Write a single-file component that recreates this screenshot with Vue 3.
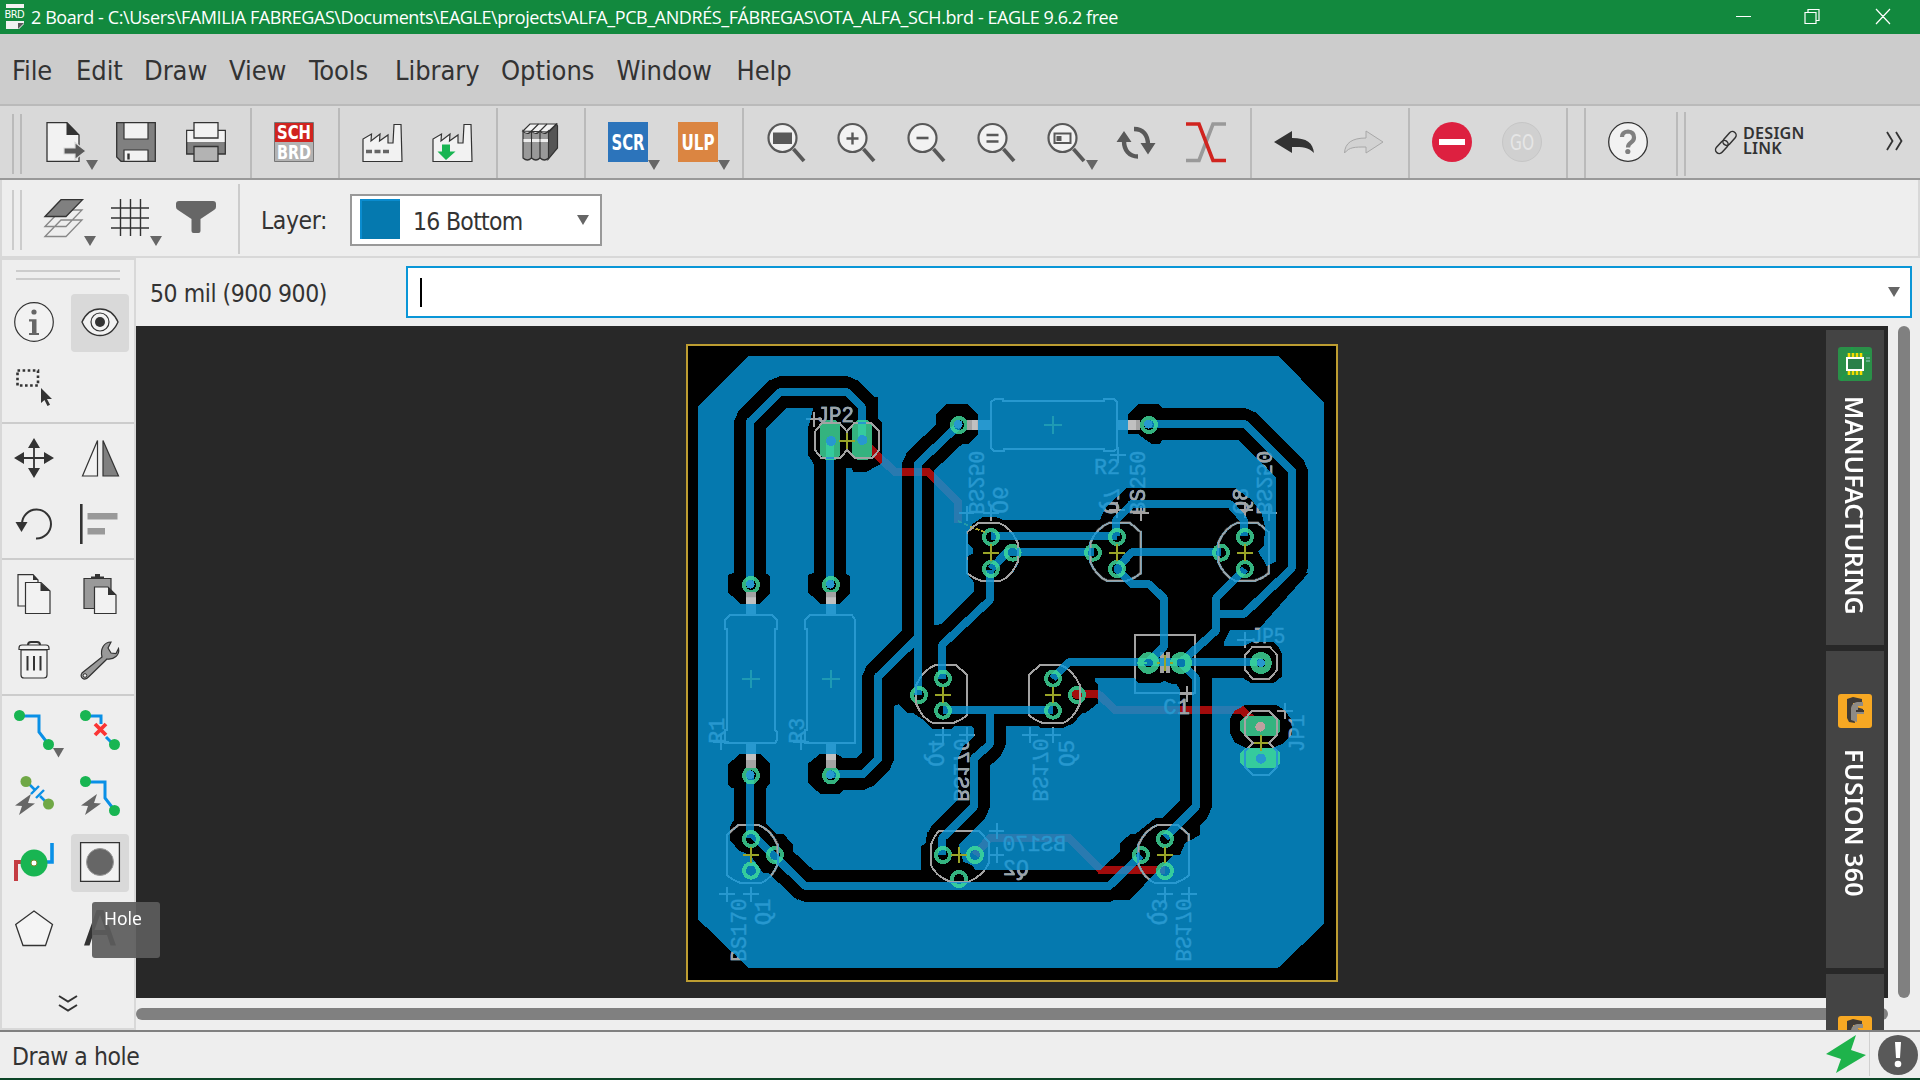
<script setup>
const D = '#333'
const lens = '<circle cx="16.500" cy="16" r="14" fill="#f2f2f2" stroke="#595959" stroke-width="2.200"/><path d="M27.500 27L38 39" stroke="#595959" stroke-width="3.800" fill="none"/>'
const plant = `<path d="M1 39.500V17l8.500-5-.5 7 9-7-.5 7 8.500-6v8h5L32 2.500h7l1 37z" fill="#f2f2f2" stroke="${D}" stroke-width="1.200"/>`
const bolt = '<path d="M17 0L1 11.500l7 .5L5 21 21 9.500l-7-.5z" transform="translate(0 18)" fill="#666"/>'
const dot = (x, y, c = '#18b552') => `<circle cx="${x}" cy="${y}" r="5.500" fill="${c}"/>`
const tab = (w) => `font-family="Liberation Sans Narrow, DejaVu Sans Condensed, sans-serif" font-weight="bold" text-anchor="middle" textLength="${w}" lengthAdjust="spacingAndGlyphs"`

const icons = {
  export: `<path d="M1 .7H21L33 13V39.300H1z" fill="#f2f2f2" stroke="${D}" stroke-width="1.300"/><path d="M20.500.5V13H33z" fill="${D}"/><path d="M18 26h11v-5.500l11 8.500-11 8.500V32H18z" fill="#595959" stroke="#d9d9d9" stroke-width="1.200"/>`,
  save: `<path d="M.7.7H39.300V39.300H5L.7 35z" fill="#808080" stroke="${D}" stroke-width="1.300"/><path d="M8 .7V17H32V.7zM8 39.300V28H32V39.300z" fill="#f2f2f2" stroke="${D}" stroke-width="1.200"/><path d="M12.500 31.500v6" stroke="${D}" stroke-width="2.400"/>`,
  print: `<path d="M.7 8.500H39.300V32H.7z" fill="#808080" stroke="${D}" stroke-width="1.300"/><path d="M1.300 9H38.700V20H1.300z" fill="#f2f2f2"/><path d="M8 .7H32V16H8z" fill="#f2f2f2" stroke="${D}" stroke-width="1.300"/><path d="M8 24.500H32V39.300H8z" fill="#b3b3b3" stroke="${D}" stroke-width="1.300"/>`,
  sch: `<path d="M.5.5h39v39H.5z" fill="#b3b3b3" stroke="#777"/><path d="M1 1h38v19H1z" fill="#d0241f"/><g fill="#fff" font-size="19"><text x="20" y="17" ${tab(34)}>SCH</text><text x="20" y="37" ${tab(34)}>BRD</text></g>`,
  plant: plant + '<path d="M4 29.500H29" stroke="#666" stroke-width="3.400" stroke-dasharray="6 2.500"/>',
  plantDown: plant + '<path d="M10 22.500h8v7h5.500L14 38 5.500 29.500H10z" fill="#18b552"/>',
  books: `<g stroke="${D}" stroke-width="1.200"><path d="M27 12L36.500 2l1 2v22L28 37.500z" fill="#555"/><path d="M3 9L10 2h26.500L28 10z" fill="#f2f2f2"/><path d="M3 9q4 5 8.500 0 4 5 8.500 0 4 5 8.500 0V36q-4 4-8.500 0-4 4-8.500 0-4 4-8.500 0z" fill="#999"/><path d="M11.500 9v27M20 9v27M11.500 9l7-7M20 9l7-7" fill="none"/></g><path d="M3.500 17h7.500v3H3.500zM12 17h7.500v3H12zM20.500 17h7.500v3h-7.500z" fill="#eee"/>`,
  scr: `<path d="M0 0h40v40H0z" fill="#2c74bb"/><text x="20" y="27.500" font-size="21" fill="#fff" ${tab(33)}>SCR</text>`,
  ulp: `<path d="M0 0h40v40H0z" fill="#db8541"/><text x="20" y="27.500" font-size="21" fill="#fff" ${tab(33)}>ULP</text>`,
  fit: lens + '<path d="M7 10.500h19v11.500H7z" fill="#595959"/>',
  plus: lens + '<path d="M10.500 16.500h12M16.500 10.500v12" stroke="#595959" stroke-width="2.400"/>',
  minus: lens + '<path d="M10.500 16h12" stroke="#595959" stroke-width="2.600"/>',
  equal: lens + '<path d="M10.500 13h12M10.500 19.500h12" stroke="#595959" stroke-width="2.400"/>',
  area: lens + '<path d="M8.500 11.500h16v9.500h-16z" fill="#f2f2f2" stroke="#595959" stroke-width="2"/><path d="M10.500 14h5v5h-5z" fill="#595959"/>',
  refresh: '<g fill="none" stroke="#595959" stroke-width="4.400"><path d="M18 7C27 7 32 13 32 23"/><path d="M22 34.500C13 34.500 8 28 8 19"/></g><path d="M24.500 21H39.500L32 32.500zM.5 20H15.500L8 9z" fill="#595959"/>',
  ratsnest: '<path d="M0 38.500H13L27 2h13" fill="none" stroke="#999" stroke-width="3.600"/><path d="M0 2h13L27 38.500h13" fill="none" stroke="#d0241f" stroke-width="3.600"/>',
  undo: `<path d="M0 20L18 9v7c15 0 21 5 22 15-6-6-11-6-22-6v6z" fill="${D}"/>`,
  redo: '<path d="M39 20L22 9v7C8 16 1 21 .500 31c5-6 10-6 21.500-6v6z" fill="#d2d2d2" stroke="#a8a8a8"/>',
  stop: '<circle cx="20" cy="20" r="20" fill="#dd2040"/><path d="M7 17h26v6H7z" fill="#fff"/>',
  go: '<circle cx="20" cy="20" r="19.500" fill="#d0d0d0" stroke="#c6c6c6"/><text x="20" y="28" font-family="Liberation Sans Narrow, DejaVu Sans Condensed, sans-serif" font-size="22" fill="#e6e6e6" text-anchor="middle" textLength="24" lengthAdjust="spacingAndGlyphs">GO</text>',
  help: `<circle cx="20" cy="20" r="19.300" fill="#f2f2f2" stroke="${D}" stroke-width="1.300"/><path d="M14 15q0-5 6-5.500 6 .5 6 6 0 3-3 5-3 2-3 5" fill="none" stroke="#808080" stroke-width="4.200"/><circle cx="19.800" cy="29.500" r="2.600" fill="#808080"/>`,
  layers: `<g stroke="${D}" stroke-width="1.300"><path d="M1 37.500L17 21h21L22 37.500zM1 27.500L17 11h21L22 27.500z" fill="#eee" stroke="#888"/><path d="M1 17.500L17 .7h21.500L22 17.500z" fill="#808080"/></g>`,
  grid: `<path d="M9.500 0v37M19.500 0v37M29.500 0v37M0 9h38M0 19h38M0 29h38" stroke="${D}" stroke-width="1.400"/>`,
  funnel: '<path d="M0 5q0-3 3-3h34q3 0 3 3v3q0 2-2 3L24.500 20v12q0 2-2 2h-5q-2 0-2-2V20L2 11Q0 10 0 8z" fill="#666"/>',
  info: `<circle cx="20" cy="20" r="19.300" fill="#f2f2f2" stroke="${D}" stroke-width="1.200"/><circle cx="20" cy="10" r="2.600" fill="#666"/><path d="M15 17.300h7.500V31h2.500v2H15v-2h3V19.500h-3z" fill="#666"/>`,
  eye: `<path d="M2 20C6 11 12 7 20 7s14 4 18 13c-4 9-10 13.500-18 13.500S6 29 2 20z" fill="#f2f2f2" stroke="${D}" stroke-width="1.400"/><circle cx="20" cy="20" r="9" fill="#f2f2f2" stroke="${D}" stroke-width="1.200"/><circle cx="20" cy="20" r="5" fill="${D}"/>`,
  select: `<path d="M3.500 2.500h20.500v15H3.500z" fill="none" stroke="${D}" stroke-width="2.600" stroke-dasharray="2.600 2.500"/><path d="M27 20V35l3.500-3 3 6 2.500-1.200-3-5.800h5z" fill="${D}"/>`,
  move: `<path d="M20 5v30M5 20h30" stroke="${D}" stroke-width="1.800"/><path d="M20 0l6 10H14zM20 40l6-10H14zM0 20l10-6v12zM40 20l-10-6v12z" fill="${D}"/>`,
  mirror: `<path d="M17.500 2.500V38H2.500z" fill="#f2f2f2" stroke="${D}" stroke-width="1.200"/><path d="M23 2.500V38H38.500z" fill="#808080" stroke="${D}" stroke-width="1.200"/>`,
  rotate: `<path d="M22 34.500A14.500 14.500 0 1 0 8 20" fill="none" stroke="${D}" stroke-width="2"/><path d="M1.500 18H13.500L7.500 28z" fill="${D}"/>`,
  align: `<path d="M1.300 0v40" stroke="${D}" stroke-width="2.600"/><path d="M7.500 9h30v6.500h-30zM7.500 24H25v6.500H7.500z" fill="#999"/>`,
  copy: `<g fill="#f2f2f2" stroke="${D}" stroke-width="1.200"><path d="M4 .6H19L24 6V32H4z"/><path d="M11.500 8.500H27L36 17V39.500H11.500z"/></g><path d="M19 .6V6h5zM26.500 8.500V17H36z" fill="${D}"/>`,
  paste: `<path d="M4 4.500H31V34.500H4z" fill="#999" stroke="${D}" stroke-width="1.200"/><path d="M11 5V2.500h4V0h5v2.500h4V5z" fill="${D}"/><path d="M14.500 13H28L36 21V39.500H14.500z" fill="#f2f2f2" stroke="${D}" stroke-width="1.200"/><path d="M28 13v8h8z" fill="${D}"/>`,
  trash: `<g fill="#f2f2f2" stroke="${D}" stroke-width="1.200"><path d="M7 10H33V35q0 3-3 3H10q-3 0-3-3z"/><path d="M14 5q0-3 3-3h6q3 0 3 3" fill="none" stroke-width="2"/><path d="M5 9.500V8q0-3 3-3H32q3 0 3 3V9.500z"/></g><path d="M13.500 16v14.500M20 16v14.500M26.500 16v14.500" stroke="${D}" stroke-width="2"/>`,
  wrench: `<path d="M22 17C20 9 24 2 31 2l-3 6 3 5 5 .5 2.500-5C40 15 34 20 27 19L9 36.500C4 42-1 37 2 33z" fill="#999" stroke="${D}" stroke-width="1.200"/><circle cx="5" cy="35.500" r="1.800" fill="#f2f2f2" stroke="${D}"/>`,
  route: '<path d="M6 6H25V22L35 35" fill="none" stroke="#0a90e6" stroke-width="3"/>' + dot(5.5, 5.5) + dot(34.500, 34.500) + '<path d="M39 38H50L44.500 47.500z" fill="#666"/>',
  ripup: '<path d="M6 6H21V14M26 27L34 35" fill="none" stroke="#0a90e6" stroke-width="3"/>' + dot(5.5, 5.5) + dot(34.500, 34.500) + '<path d="M15 14l11 11M26 14L15 25" stroke="#fb3535" stroke-width="3.800"/>',
  airwire: '<path d="M12 5L21 14M26 20L35 29" stroke="#0a90e6" stroke-width="2.600"/><path d="M17 18l8-8M22 22l8-8" stroke="#0a90e6" stroke-width="2.400"/>' + dot(12, 5.500, '#70a846') + dot(34.500, 28, '#70a846') + bolt,
  auto: '<path d="M6 6H25V22L35 35" fill="none" stroke="#0a90e6" stroke-width="3"/>' + dot(5.5, 5.5) + dot(34.500, 34.500) + bolt,
  via: '<path d="M2 39V20h8" fill="none" stroke="#c43c42" stroke-width="4"/><path d="M32 20h6V1" fill="none" stroke="#0a90e6" stroke-width="3.600"/><circle cx="20" cy="21" r="13.500" fill="#18b552"/><circle cx="20" cy="21" r="3" fill="#fff" stroke="#7a8a30"/>',
  hole: `<path d="M.6.6h38.800v38.800H.6z" fill="#f2f2f2" stroke="${D}" stroke-width="1.300"/><circle cx="20" cy="20" r="13.500" fill="#666" stroke="#999"/>`,
  polygon: `<path d="M20 3L38.500 16.500 31.500 37.500H9L1.700 16.500z" fill="#f4f4f4" stroke="${D}" stroke-width="1.300"/>`,
  text: `<path d="M4 37.500L16.500 2h7L36 37.500h-5.500L27 27H13L9.500 37.500zM14.500 22h11L20 7z" fill="${D}"/>`,
  chip: '<path d="M3 0h28q3 0 3 3v28q0 3-3 3H3q-3 0-3-3V3q0-3 3-3z" fill="#2a9048"/><path d="M4 34V30l14-10M14 0v6h18" stroke="#10a848" fill="none"/><path d="M11 6v22M15 6v22M19 6v22M23 6v22" stroke="#f3dc00" stroke-width="2.600"/><path d="M9 11h16v12H9z" fill="#2a8048" stroke="#fff" stroke-width="2"/><path d="M28 11h4M28 14h4" stroke="#9cc"/>',
  fusion: '<path d="M3 0h28q3 0 3 3v28q0 3-3 3H3q-3 0-3-3V3q0-3 3-3z" fill="#f7a823"/><path d="M9 5l6-2 9 2v4h-9v3l10 3v3h-10l2 11-6-1-2-4z" fill="#403b36"/><path d="M13 26V14q1-5 6-6h6v4h-5v4h6v4h-7v8z" fill="#8e8b86"/><path d="M18 16h8v2h-8z" fill="#403b36"/>'
}

const mainGroups = [
  [['export', 1], ['save'], ['print']],
  [['sch']],
  [['plant'], ['plantDown']],
  [['books']],
  [['scr', 1], ['ulp', 1]],
  [['fit'], ['plus'], ['minus'], ['equal'], ['area', 1], ['refresh'], ['ratsnest']],
  [['undo'], ['redo']],
  [['stop'], ['go']]
]
const menus = [['File', 64], ['Edit', 68], ['Draw', 85], ['View', 80], ['Tools', 86], ['Library', 106], ['Options', 115.500], ['Window', 120], ['Help', 60]]
const tools = [
  ['info', 'eye', 'select'],
  ['move', 'mirror', 'rotate', 'align'],
  ['copy', 'paste', 'trash', 'wrench'],
  ['route', 'ripup', 'airwire', 'auto', 'via', 'hole', 'polygon', 'text']
]

// Board geometry, in thirds of a pixel
const traces = [
  'M210 735V245L301 156H501L546 202V300', 'M450 300V735', 'M837 255L714 371V1064',
  'M714 893L594 1010V1258L550 1302H453', 'M210 1306V1495', 'M213 1480L375 1638H1288L1383 1545',
  'M1503 969L1548 1014V1400L1455 1493', 'M1407 252H1695L1836 392V685L1692 822H1596',
  'M930 1110V1213L882 1255V1400L786 1495V1545'
]
const innerTraces = [
  'M930 690V780L786 915V1016', 'M933 588H1311', 'M933 687L982 636H1242', 'M789 1110H1119',
  'M1695 687L1608 775V872L1505 965', 'M1308 588V540L1355 492H1650L1692 540V588',
  'M1623 636H1355L1311 687L1355 732H1407L1452 775V920L1405 967', 'M1118 1016L1165 967H1743',
  'M1407 252H1695L1836 392V685L1692 822H1608'
]
const rings = [
  [213, 735], [453, 735], [213, 1306], [453, 1306], [837, 255], [1407, 255],
  [933, 591], [998, 638], [933, 687], [1311, 591], [1239, 638], [1311, 687], [1695, 591], [1623, 638], [1695, 687],
  [789, 1016], [717, 1065], [789, 1112], [1119, 1016], [1191, 1065], [1119, 1112],
  [213, 1497], [285, 1545], [213, 1592], [789, 1545], [885, 1545], [837, 1617], [1455, 1497], [1383, 1545], [1455, 1593]
]
const transistors = [
  [933, 638, 0], [1311, 638, 180], [1695, 638, 180], [789, 1065, 180], [1119, 1065, 0], [213, 1545, 0], [1455, 1545, 180], [837, 1545, 90]
].map(([x, y, r]) => `translate(${x} ${y}) ` + (r === 180 ? 'scale(-1 1)' : r === 90 ? 'translate(0 75) rotate(90) translate(-75 0)' : ''))
const crosses = [[501, 303], [933, 638], [1311, 638], [1695, 638], [789, 1065], [1119, 1065], [213, 1545], [837, 1545], [1455, 1545], [1743, 1209], [1455, 969]]
const labels = [
  ['JP2', 466, 223, 0, 1, 112], ['R2', 1281, 378, 0, 1, 78], ['BS250', 891, 428, -90, -1, 192], ['Q6', 963, 480, -90, -1, 82],
  ['BS250', 1371, 428, -90, 1, 192], ['Q7', 1296, 483, -90, -1, 80], ['BS250', 1755, 428, -90, -1, 192], ['Q8', 1680, 483, -90, 1, 80],
  ['JP5', 1764, 885, 0, 1, 104], ['C1', 1490, 1097, 0, 1, 80], ['JP1', 1848, 1180, -90, 1, 112],
  ['R1', 107, 1172, -90, 1, 78], ['R3', 347, 1172, -90, 1, 78], ['Q4', 772, 1240, -90, -1, 80], ['BS170', 847, 1290, -90, -1, 190],
  ['BS170', 1083, 1290, -90, -1, 190], ['Q5', 1158, 1240, -90, 1, 80], ['BS170', 174, 1770, -90, 1, 190], ['Q1', 247, 1716, -90, 1, 80],
  ['Q3', 1440, 1716, -90, -1, 80], ['BS170', 1512, 1770, -90, -1, 190], ['BS170', 1063, 1508, 0, -1, 190], ['Q2', 1008, 1580, 0, -1, 78]
]
const origins = [[402, 238], [354 + 960, 345], [860, 520], [933, 520], [1383, 520], [1311, 510], [1768, 520], [1695, 510], [1695, 900], [1520, 1062], [1815, 1113],
  [123, 1206], [363, 1206], [789, 1185], [861, 1185], [1050, 1185], [1119, 1185], [141, 1663], [213, 1663], [1455, 1663], [1527, 1663], [950, 1473], [950, 1545]]
</script>

<template>
  <div class="window">
    <header class="title">
      <svg class="app-icon" width="22" height="26" viewBox="0 0 22 26"><path d="M2 1h18v4H2zM2 18h18v3l-5 5H2z" fill="#f2f2f2" /><path d="M14 26v-6h6z" fill="#595959" /><text x="10.500" y="15" font-family="DejaVu Sans Condensed, sans-serif" font-size="11" fill="#fff" text-anchor="middle" textLength="20">BRD</text></svg>
      <span class="title-text">2 Board - C:\Users\FAMILIA FABREGAS\Documents\EAGLE\projects\ALFA_PCB_ANDRÉS_FÁBREGAS\OTA_ALFA_SCH.brd - EAGLE 9.6.2 free</span>
      <svg class="controls" width="160" height="34" viewBox="0 0 160 34" fill="none" stroke="#fff" stroke-width="1.200"><path d="M0 16.500H15M69 12.500H80V23.500H69zM72 12V9.500H83V20.500H80M140 9L154 24M154 9L140 24" /></svg>
    </header>

    <nav class="menu"><span v-for="m in menus" :key="m[0]" :style="{ width: m[1] + 'px' }">{{ m[0] }}</span></nav>

    <div class="main-bar">
      <i class="grip"></i>
      <div v-for="(g, i) in mainGroups" :key="i" class="group">
        <div v-for="b in g" :key="b[0]" class="btn">
          <svg width="40" height="40" viewBox="0 0 40 40" v-html="icons[b[0]]"></svg>
          <i v-if="b[1]" class="drop"></i>
        </div>
      </div>
      <div class="gap"></div>
      <div class="group help"><div class="btn"><svg width="40" height="40" viewBox="0 0 40 40" v-html="icons.help"></svg></div></div>
      <i class="grip second"></i>
      <svg class="link" width="24" height="26" viewBox="0 0 24 26" fill="none" stroke="#333" stroke-width="1.500"><g transform="rotate(-48 12 13)"><rect x="-2" y="9.500" width="15" height="7.500" rx="3.700" /><rect x="9" y="9.500" width="16" height="7.500" rx="3.700" /></g></svg>
      <div class="design"><span>DESIGN</span><span>LINK</span></div>
      <svg class="more" width="18" height="20" viewBox="0 0 18 20" fill="none" stroke="#333" stroke-width="1.800"><path d="M1 1l5.500 9L1 19M10 1l5.500 9L10 19" /></svg>
    </div>

    <div class="sub-bar">
      <i class="grip"></i>
      <div class="btn layers"><svg width="40" height="40" viewBox="0 0 40 40" v-html="icons.layers"></svg><i class="drop"></i></div>
      <div class="btn gridb"><svg width="40" height="40" viewBox="0 0 40 40" v-html="icons.grid"></svg><i class="drop"></i></div>
      <div class="btn funnel"><svg width="40" height="40" viewBox="0 0 40 40" v-html="icons.funnel"></svg></div>
      <div class="vline"></div>
      <span class="layer-label">Layer:</span>
      <div class="combo"><i class="swatch"></i><span>16 Bottom</span><i class="tri"></i></div>
    </div>

    <div class="body">
      <aside class="tools">
        <div class="hgrip"></div>
        <section v-for="(s, i) in tools" :key="i">
          <div v-for="t in s" :key="t" class="tool" :class="{ on: t === 'eye' || t === 'hole' }">
            <svg width="40" height="40" viewBox="0 0 40 40" v-html="icons[t]"></svg>
          </div>
        </section>
        <svg class="down" width="20" height="18" viewBox="0 0 20 18" fill="none" stroke="#333" stroke-width="2"><path d="M1 1l9 5.500L19 1M1 10l9 5.500L19 10" /></svg>
        <div class="tip">Hole</div>
      </aside>

      <main class="work">
        <div class="command">
          <span class="coords">50 mil (900 900)</span>
          <div class="input"><i class="caret"></i><i class="tri"></i></div>
        </div>
        <div class="view">
          <div class="canvas">
            <svg class="board" width="652" height="638" viewBox="18 12 1956 1914">
              <defs>
                <g id="copper" fill="none" stroke-width="96" stroke-linejoin="bevel">
                  <path class="cu-fill" d="M207 48H1795L1932 187V1752L1795 1883H205L54 1738V200z" />
                  <g class="gap-line"><path v-for="t in traces" :key="t" :d="t" /></g>
                  <g class="gap-fill">
                    <path d="M756 850L768 857 786 850 882 755V727L865 705 862 650 880 640V628L865 612 862 575 880 550 910 530H945L970 540H1260L1268 520 1280 500 1340 444H1665L1715 480 1745 520 1755 560 1752 615 1734 635 1750 660 1760 678 1788 665 1884 700 1760 840 1735 870H1650L1632 905V917H1692L1720 905H1780L1795 920 1805 940V1010L1780 1030H1715L1690 1015H1596L1500 1050 1490 1033 1470 1030 1452 1022 1440 1030H1375L1365 1015H1245V1025L1254 1035V1090L1215 1120H1205L1180 1150 1145 1165H1085L1075 1158H972V1230L925 1275 870 1245 882 1225V1165L875 1158H825L815 1168H760L730 1140 700 1120H685L655 1093 642 1098 625 1030 756 900z" />
                    <path d="M180 690H240L270 708V760L240 792H183L145 758V705zM420 690H480L510 708V760L480 792H423L385 758V705zM180 1242H243L270 1272V1330L258 1345H155L145 1335V1272zM420 1242H468L490 1254V1352L480 1361H420L385 1330V1270zM800 192H862L893 222V285L865 312H830L768 250V222zM1415 192H1435L1448 204V300L1438 312H1415L1374 282H1344V222L1374 192z" />
                    <path d="M400 204L384 265V345L402 373 498 385H515L520 395H560L605 370V248L594 235V170L400 204z" />
                    <path d="M162 1440L150 1460V1500L175 1530 213 1548 250 1600H270L354 1680 400 1590 340 1535V1515L310 1482H290L258 1452zM740 1475V1508L722 1520V1600H895L875 1575 850 1565 838 1530V1495zM1395 1435H1425L1365 1483H1350L1320 1510V1535L1260 1590 1280 1680H1350L1420 1605 1480 1545H1500L1515 1510 1560 1485V1430z" />
                    <path d="M1695 1095H1790L1815 1112 1835 1140V1185L1810 1210 1780 1223H1695L1665 1208 1650 1180V1135L1665 1112z" />
                  </g>
                  <g class="cu-line"><path v-for="t in traces" :key="t" :d="t" /><path v-for="t in innerTraces" :key="t" :d="t" /></g>
                </g>
                <mask id="bare" maskUnits="userSpaceOnUse" x="0" y="0" width="2000" height="1950"><rect width="2000" height="1950" fill="#fff" /><use href="#copper" class="as-mask" shape-rendering="crispEdges" /></mask>
              </defs>
              <rect x="21" y="15" width="1950" height="1908" fill="#000" stroke="#bd9d31" stroke-width="6" />
              <g shape-rendering="crispEdges">
                <use href="#copper" class="as-copper" />
                <path v-for="m in [0, 1]" :key="m" :mask="m ? 'url(#bare)' : null" :stroke="m ? '#a30c0c' : '#297ab0'" d="M546 303L645 396H745L834 485V548M1190 1062H1255L1305 1110H1685L1740 1160M885 1545L930 1494H1168L1262 1590H1455" fill="none" stroke-width="24" />
                <g v-for="m in [0, 1]" :key="'p' + m" :mask="m ? 'url(#bare)' : null" :fill="m ? '#34b37f' : '#35cb9d'" :stroke="m ? '#34b37f' : '#35cb9d'">
                  <circle v-for="(r, i) in rings" :key="i" :cx="r[0]" :cy="r[1]" r="21" fill="none" stroke-width="12" />
                  <path d="M435 240H465L480 255V345L465 360H435L420 345V255zM531 240H561L576 255V345L561 360H531L516 345V255zM1695 1128H1785L1800 1143V1173L1785 1188H1695L1680 1173V1143zM1695 1224H1785L1800 1239V1269L1785 1284H1695L1680 1269V1239z" stroke="none" />
                  <circle v-for="x in [1405, 1503, 1743]" :key="x" :cx="x" cy="969" r="23" fill="none" stroke-width="19" />
                </g>
                <g fill="#2798cf"><circle cx="453" cy="303" r="15" /><circle cx="547" cy="300" r="15" /><circle cx="1743" cy="1256" r="15" /><circle cx="1743" cy="969" r="13" /><circle v-for="(r, i) in rings.slice(0, 6)" :key="i" :cx="r[0] - 2" :cy="r[1] - 2" r="13" /></g>
                <circle cx="1741" cy="1160" r="15" fill="#c0a0a0" />
                <circle cx="1190" cy="1063" r="14" fill="#a30c0c" />
                <path d="M1445 969H1485M1370 969H1400" stroke="#35cb9d" stroke-width="5" />
                <path v-for="(c, i) in crosses" :key="i" :d="`M${c[0] - 25} ${c[1]}h50M${c[0]} ${c[1] - 25}v50`" stroke="#9aa528" stroke-width="6" />
                <path d="M1092 255h54M1119 228v54M186 1017h54M213 990v54M426 1017h54M453 990v54" stroke="#1e9ab4" stroke-width="6" />
                <path d="M834 543L868 558" stroke="#249aa8" stroke-width="5" stroke-dasharray="12 8" />
                <path d="M870 560L915 576" stroke="#b0a830" stroke-width="5" stroke-dasharray="12 6" />
              </g>
              <g class="silk-blue" shape-rendering="crispEdges">
                <g id="silk" fill="none" stroke="currentColor" stroke-width="6">
                  <path d="M150 825H276L291 840V868H285V1170L291 1175V1200L285 1209H135V1170H141V868H135V840zM390 825H516L525 840V1209H375V1170H381V868H375V840zM945 177H970V183H1272V177H1302L1311 186V326L1302 333H1272V327H972V333H942L932 322V186z" />
                  <path v-for="(t, i) in transistors" :key="i" :transform="t" d="M-71-62L-38-90H22Q60-76 80-30V28Q62 72 28 85H-28L-52 75-71 62z" />
                  <path d="M425 250H480L501 275 522 250H575L598 275V330L575 355H525L501 330 480 355H425L405 330V275zM1365 885H1545V1060H1365zM1718 920H1768L1792 945V990L1768 1016H1718L1695 990V945zM1715 1113H1768L1792 1137V1185L1768 1209 1792 1233V1280L1768 1305H1718L1695 1280V1233L1718 1209 1695 1185V1137z" />
                  <path d="M1446 937V1000M1464 937V1000" stroke-width="12" />
                  <path d="M213 757V825M453 757V825M213 1209V1283M453 1209V1283M862 255H932M1311 255H1380" stroke-width="30" />
                  <path v-for="(o, i) in origins" :key="'o' + i" :d="`M${o[0] - 23} ${o[1]}h46M${o[0]} ${o[1] - 23}v46`" />
                  <g class="silk-text"><text v-for="(l, i) in labels" :key="'t' + i" :textLength="l[5]" lengthAdjust="spacingAndGlyphs" :transform="`translate(${l[1]} ${l[2]}) rotate(${l[3]}) scale(${l[3] ? 1 : l[4]} ${l[3] ? l[4] : 1})`" y="24">{{ l[0] }}</text></g>
                </g>
              </g>
              <use href="#silk" class="silk-grey" mask="url(#bare)" shape-rendering="crispEdges" />
              <g fill="#c0c0c0"><path d="M198 772h30v20h-30zM438 772h30v20h-30zM198 1242h30v18h-30zM438 1242h30v18h-30zM876 240h17v30h-17zM1344 240h24v30h-24z" /></g>
            </svg>
          </div>
          <div class="vbar"></div>
          <div class="hbar"></div>
          <div class="tabs">
            <div class="tab t1"><svg width="34" height="34" viewBox="0 0 34 34" v-html="icons.chip"></svg><span>MANUFACTURING</span></div>
            <div class="tab t2"><svg width="34" height="34" viewBox="0 0 34 34" v-html="icons.fusion"></svg><span>FUSION 360</span></div>
            <div class="tab t3"><svg width="34" height="34" viewBox="0 0 34 34" v-html="icons.fusion"></svg></div>
          </div>
        </div>
      </main>
    </div>

    <footer class="status">
      <span>Draw a hole</span>
      <svg width="94" height="44" viewBox="0 0 94 44"><path d="M30 3L0 22l15 5-5 14 30-18-15-5z" fill="#1eb34b" /><path d="M43.500 0v44" stroke="#d0d0d0" /><circle cx="72" cy="23" r="20" fill="#595959" /><path d="M69 10h6l-1 16h-4z" fill="#fff" /><circle cx="72" cy="32" r="3.300" fill="#fff" /></svg>
    </footer>
  </div>
</template>

<style>
body { overflow: hidden; }
</style>

<style scoped>
.window { width: 1920px; height: 1080px; display: flex; flex-direction: column; background: #eee; color: #333; font-family: "DejaVu Sans Condensed", "Noto Sans", sans-serif; overflow: hidden; box-sizing: border-box; border-bottom: 2px solid #0c4527; }
.window *, .window { box-sizing: border-box; }
svg { display: block; flex: none; overflow: visible; }
i { display: block; flex: none; }
.title { height: 34px; flex: none; background: #12893e; display: flex; align-items: center; padding-left: 4px; color: #fff; }
.app-icon { margin-bottom: 2px; }
.title-text { margin-left: 5px; font: 18px/34px "Open Sans", "Noto Sans", sans-serif; white-space: nowrap; flex: 1; letter-spacing: -.42px; }
.controls { margin-right: 24px; }
.menu { height: 72px; flex: none; background: #ccc; border-bottom: 2px solid #bababa; display: flex; padding: 1px 0 0 12px; font-size: 27px; line-height: 72px; letter-spacing: -.05px; white-space: nowrap; }
.menu span { flex: none; }
.main-bar { height: 74px; flex: none; background: #d9d9d9; border-bottom: 2px solid #999; display: flex; align-items: stretch; padding-left: 12px; }
.grip { width: 10px; margin: 8px 2px 4px 0; border-left: 2px solid #bababa; border-right: 2px solid #bababa; }
.main-bar .group { display: flex; gap: 30px; padding: 14px 24px 0 22px; border-right: 2px solid #bababa; margin-top: 2px; flex: none; }
.btn { position: relative; width: 40px; height: 40px; flex: none; }
.drop, .tri { width: 0; height: 0; border: 6px solid transparent; border-top: 10px solid #666; border-bottom: 0; }
.drop { position: absolute; left: 40px; top: 38px; }
.gap { width: 18px; border-right: 2px solid #bababa; margin-top: 2px; flex: none; }
.main-bar .help { border: 0; padding-right: 28px; }
.grip.second { margin: 6px 28px 2px 0; }
.link { margin-top: 23px; }
.design { margin: 20px 0 0 5px; width: 66px; font: 600 16.200px/15px "Noto Sans", sans-serif; letter-spacing: .2px; flex: none; display: flex; flex-direction: column; }
.more { margin: 25px 0 0 77px; }
.sub-bar { height: 78px; flex: none; display: flex; align-items: flex-start; padding-left: 10px; border-left: 2px solid #d8d8d8; border-right: 2px solid #d8d8d8; border-bottom: 2px solid #d8d8d8; }
.sub-bar .grip { height: 60px; margin: 10px 0 0; border-color: #ccc; }
.sub-bar .btn { margin-top: 19px; }
.layers { margin-left: 22px; }
.layers .drop { top: 37px; }
.gridb { margin-left: 27px; }
.gridb .drop { top: 37px; left: 39px; }
.funnel { margin-left: 25px; }
.vline { width: 2px; height: 70px; margin: 4px 0 0 22px; background: #ccc; }
.layer-label { width: 89px; margin-left: 21px; font-size: 24.500px; line-height: 82px; letter-spacing: -.4px; height: 76px; }
.combo { width: 252px; height: 52px; margin-top: 14px; background: #fff; border: 2px solid #999; display: flex; align-items: center; padding: 0 11px 0 8px; font-size: 24.500px; letter-spacing: -.7px; }
.swatch { width: 40px; height: 40px; background: #0579af; border: solid #0a8ccf; border-width: 2px 0 0 2px; margin-bottom: 2px; }
.combo span { margin: 3px 0 0 13px; flex: 1; }
.body { height: 772px; flex: none; display: flex; }
.tools { position: relative; width: 136px; flex: none; border: 2px solid #d8d8d8; padding-top: 10px; display: flex; flex-direction: column; }
.hgrip { height: 10px; width: 104px; margin: 0 0 10px 14px; border-top: 2px solid #ccc; border-bottom: 2px solid #ccc; flex: none; }
.tools section { display: grid; grid-template-columns: 58px 58px; gap: 8px; padding: 6px 0 4px 3px; border-top: 2px solid #ccc; flex: none; }
.tools section:nth-of-type(1) { border-top: 0; padding-top: 4px; }
.tool { height: 58px; padding: 8px 9px; border-radius: 4px; }
.tool.on { background: #d9d9d9; }
.down { margin: 33px 0 0 56px; }
.tip { position: absolute; left: 90px; top: 642px; width: 68px; height: 56px; border-radius: 3px; background: rgba(92, 92, 92, .93); color: #fff; font: 17.500px/32px "Noto Sans", sans-serif; padding-left: 12px; z-index: 3; }
.work { width: 1784px; display: flex; flex-direction: column; }
.command { height: 68px; flex: none; display: flex; padding-top: 8px; }
.coords { width: 270px; padding-left: 14px; line-height: 56px; font-size: 24.500px; letter-spacing: -.45px; }
.input { width: 1506px; height: 52px; background: #fff; border: 2px solid #0a96d7; display: flex; align-items: center; justify-content: space-between; padding: 0 10px 0 12px; }
.caret { width: 2px; height: 29px; background: #000; }
.view { position: relative; display: grid; grid-template-columns: 1752px 32px; grid-template-rows: 672px 32px; }
.canvas { background: #282828; padding: 18px 0 0 550px; overflow: hidden; }
.vbar { width: 12px; height: 672px; margin-left: 10px; border-radius: 6px; background: #808080; }
.hbar { height: 12px; margin-top: 10px; border-radius: 6px; background: #808080; }
.tabs { position: absolute; right: 36px; top: 4px; height: 700px; width: 58px; display: flex; flex-direction: column; gap: 6px; overflow: hidden; }
.tab { background: #444; display: flex; flex-direction: column; align-items: center; color: #fff; font: 600 25px/40px "Noto Sans", sans-serif; flex: none; }
.tab span { writing-mode: vertical-rl; white-space: nowrap; }
.t1 { height: 315px; padding-top: 17px; }
.t1 span { margin-top: 15px; letter-spacing: -.1px; }
.t2 { height: 317px; padding-top: 43px; }
.t2 span { margin-top: 21px; letter-spacing: .4px; }
.t3 { height: 60px; padding-top: 42px; }
.status { height: 48px; flex: none; border-top: 2px solid #808080; display: flex; justify-content: space-between; padding-left: 12px; font-size: 24.500px; line-height: 50px; letter-spacing: -.45px; }
.as-copper { --cu: #0579af; --bare: #000; }
.as-mask { --cu: #000; --bare: #fff; }
.cu-fill { fill: var(--cu); }
.cu-line { stroke: var(--cu); stroke-width: 24px; }
.gap-line { stroke: var(--bare); }
.gap-fill { fill: var(--bare); }
.silk-blue { color: #2798cf; }
.silk-grey { color: #a3a3a3; }
.silk-text { fill: currentColor; stroke: currentColor; stroke-width: 1.500px; font: 68px "Liberation Mono", monospace; text-anchor: middle; }
</style>
